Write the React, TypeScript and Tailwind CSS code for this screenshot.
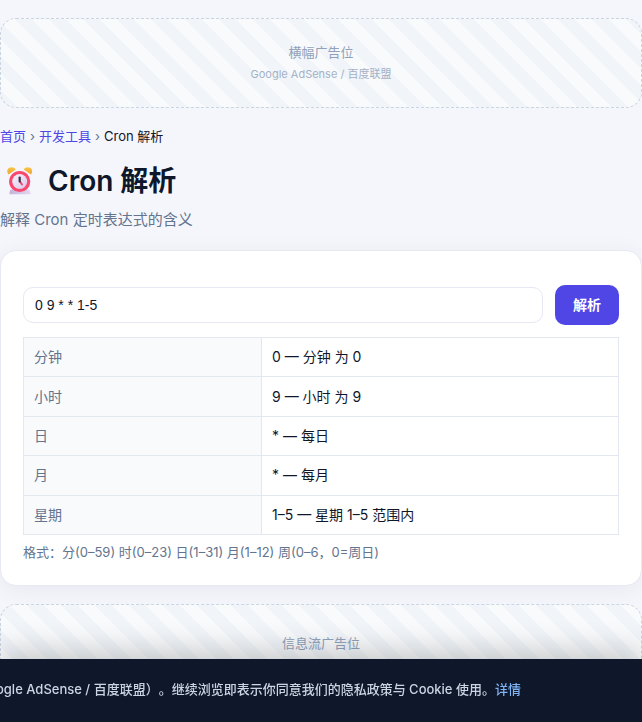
import { useState } from 'react';
import type { FormEvent } from 'react';

interface IAdSlotProps {
  title: string;
  subtitle?: string;
  className?: string;
}

function AdSlot({ title, subtitle, className = '' }: IAdSlotProps) {
  return (
    <aside
      className={`flex flex-col items-center justify-center rounded-2xl border border-dashed border-slate-300 bg-[repeating-linear-gradient(45deg,#f1f5f9_0_12px,#f8fafc_12px_24px)] text-slate-400 ${className}`}
    >
      <span className="text-[13px] leading-[22px]">{title}</span>
      {subtitle && (
        <span className="text-[11px] leading-[22px] opacity-80">
          {subtitle}
        </span>
      )}
    </aside>
  );
}

function AlarmClock() {
  return (
    <svg viewBox="0 0 32 32" className="w-8 h-8" aria-hidden="true">
      <defs>
        <linearGradient id="bell" x1="0" y1="0" x2="0" y2="1">
          <stop offset="0" stopColor="#fbc540" />
          <stop offset="1" stopColor="#eda23a" />
        </linearGradient>
        <linearGradient id="face" x1="0" y1="0" x2="1" y2="1">
          <stop offset="0" stopColor="#f6f3fb" />
          <stop offset="1" stopColor="#d9c6e8" />
        </linearGradient>
        <linearGradient id="base" x1="0" y1="0" x2="1" y2="0">
          <stop offset="0" stopColor="#c5b3d8" />
          <stop offset="1" stopColor="#e2d8f2" />
        </linearGradient>
      </defs>
      <path
        d="M7.500 24.500h16.500c1.500 0 2.500 2 2.500 4.800H5.500c0-2.800.5-4.800 2-4.800Z"
        fill="url(#base)"
      />
      <path
        d="M4.500 9.500C2.500 7 3 4.200 5.300 2.800c2.400-1.400 5.500-.5 6.500 1.700Z"
        fill="url(#bell)"
      />
      <path
        d="M26.900 9.500c2-2.500 1.500-5.300-.8-6.700-2.400-1.400-5.500-.5-6.500 1.700Z"
        fill="url(#bell)"
      />
      <circle cx="15.700" cy="16.500" r="10.600" fill="#f9476e" />
      <circle cx="15.700" cy="16.500" r="7.500" fill="url(#face)" />
      <path
        d="m16 16.500 2 3"
        stroke="#f0406a"
        strokeWidth="1.800"
        strokeLinecap="round"
      />
      <path
        d="M15.700 12.500v4"
        stroke="#3d3147"
        strokeWidth="2.200"
        strokeLinecap="round"
      />
    </svg>
  );
}

const FIELDS = [
  { label: '分钟', any: '每分钟' },
  { label: '小时', any: '每小时' },
  { label: '日', any: '每日' },
  { label: '月', any: '每月' },
  { label: '星期', any: '每天' },
];

function describe(value: string, label: string, any: string) {
  if (value === '*') return any;
  if (value.includes('-')) return `${label} ${value.replace('-', '–')} 范围内`;
  return `${label} 为 ${value}`;
}

export default function App() {
  const [expression, setExpression] = useState<string>('0 9 * * 1-5');
  const [parts, setParts] = useState<string[]>(['0', '9', '*', '*', '1-5']);

  const handleSubmit = (e: FormEvent) => {
    e.preventDefault();
    setParts(expression.trim().split(/\s+/));
  };

  return (
    <div className="min-h-screen bg-[#f5f6fc] pt-[18px] font-[Inter,'Noto_Sans_CJK_SC',sans-serif] text-slate-900 [text-spacing-trim:space-all]">
      <AdSlot
        title="横幅广告位"
        subtitle="Google AdSense / 百度联盟"
        className="min-h-[90px]"
      />

      <main>
        <nav
          aria-label="面包屑"
          className="flex gap-1 pt-[17px] text-[13px] leading-[22px]"
        >
          <a href="#home" className="text-[#4f46e5]">
            首页
          </a>
          <span className="text-slate-500">›</span>
          <a href="#dev" className="text-[#4f46e5]">
            开发工具
          </a>
          <span className="text-slate-500">›</span>
          <span>Cron 解析</span>
        </nav>

        <h1 className="flex items-center gap-3 pt-3 pl-1 text-[28px] font-semibold leading-[44px]">
          <AlarmClock />
          Cron 解析
        </h1>
        <p className="pt-[5px] text-[15px] leading-6 text-slate-500">
          解释 Cron 定时表达式的含义
        </p>

        <section className="mt-[18px] rounded-2xl border border-[#e6e8f4] bg-white px-[22px] pt-[34px] pb-[22px] shadow-[0_4px_24px_rgba(15,23,42,0.06)]">
          <form onSubmit={handleSubmit} className="flex items-center gap-3">
            <input
              type="text"
              aria-label="Cron 表达式"
              value={expression}
              onChange={(e) => setExpression(e.target.value)}
              className="flex-1 min-w-0 h-9 px-[11px] rounded-[10px] border border-[#e6e8f4] bg-white font-['Liberation_Sans',sans-serif] text-sm outline-none"
            />
            <button
              type="submit"
              className="h-10 px-[18px] rounded-[10px] bg-[#4f46e5] text-sm font-bold text-white"
            >
              解析
            </button>
          </form>

          <table className="w-full h-[198px] mt-3 border-collapse text-sm leading-[18px]">
            <tbody>
              {FIELDS.map(({ label, any }, i) => (
                <tr key={label}>
                  <th
                    scope="row"
                    className="w-2/5 px-2.5 border border-slate-200 bg-slate-50 text-left font-normal text-slate-500"
                  >
                    {label}
                  </th>
                  <td className="px-2.5 border border-slate-200">
                    {(parts[i] ?? '*').replace('-', '–')} —{' '}
                    {describe(parts[i] ?? '*', label, any)}
                  </td>
                </tr>
              ))}
            </tbody>
          </table>
          <p className="pt-1.5 text-[13px] leading-[22px] text-slate-500">
            格式：分(0–59) 时(0–23) 日(1–31) 月(1–12) 周(0–6，0=周日)
          </p>
        </section>
      </main>

      <AdSlot title="信息流广告位" className="mt-[18px] min-h-[78px]" />

      <div className="fixed inset-x-0 bottom-0 flex justify-end overflow-hidden bg-slate-900 pt-[19px] pb-[22px] pr-[121px] shadow-[0_-8px_30px_rgba(0,0,0,0.2)]">
        <p className="shrink-0 whitespace-nowrap text-[13px] font-medium leading-[22px] text-slate-300">
          Google AdSense / 百度联盟）。继续浏览即表示你同意我们的隐私政策与
          Cookie 使用。
          <a href="#privacy" className="text-[#7eb2f0]">
            详情
          </a>
        </p>
      </div>
    </div>
  );
}
